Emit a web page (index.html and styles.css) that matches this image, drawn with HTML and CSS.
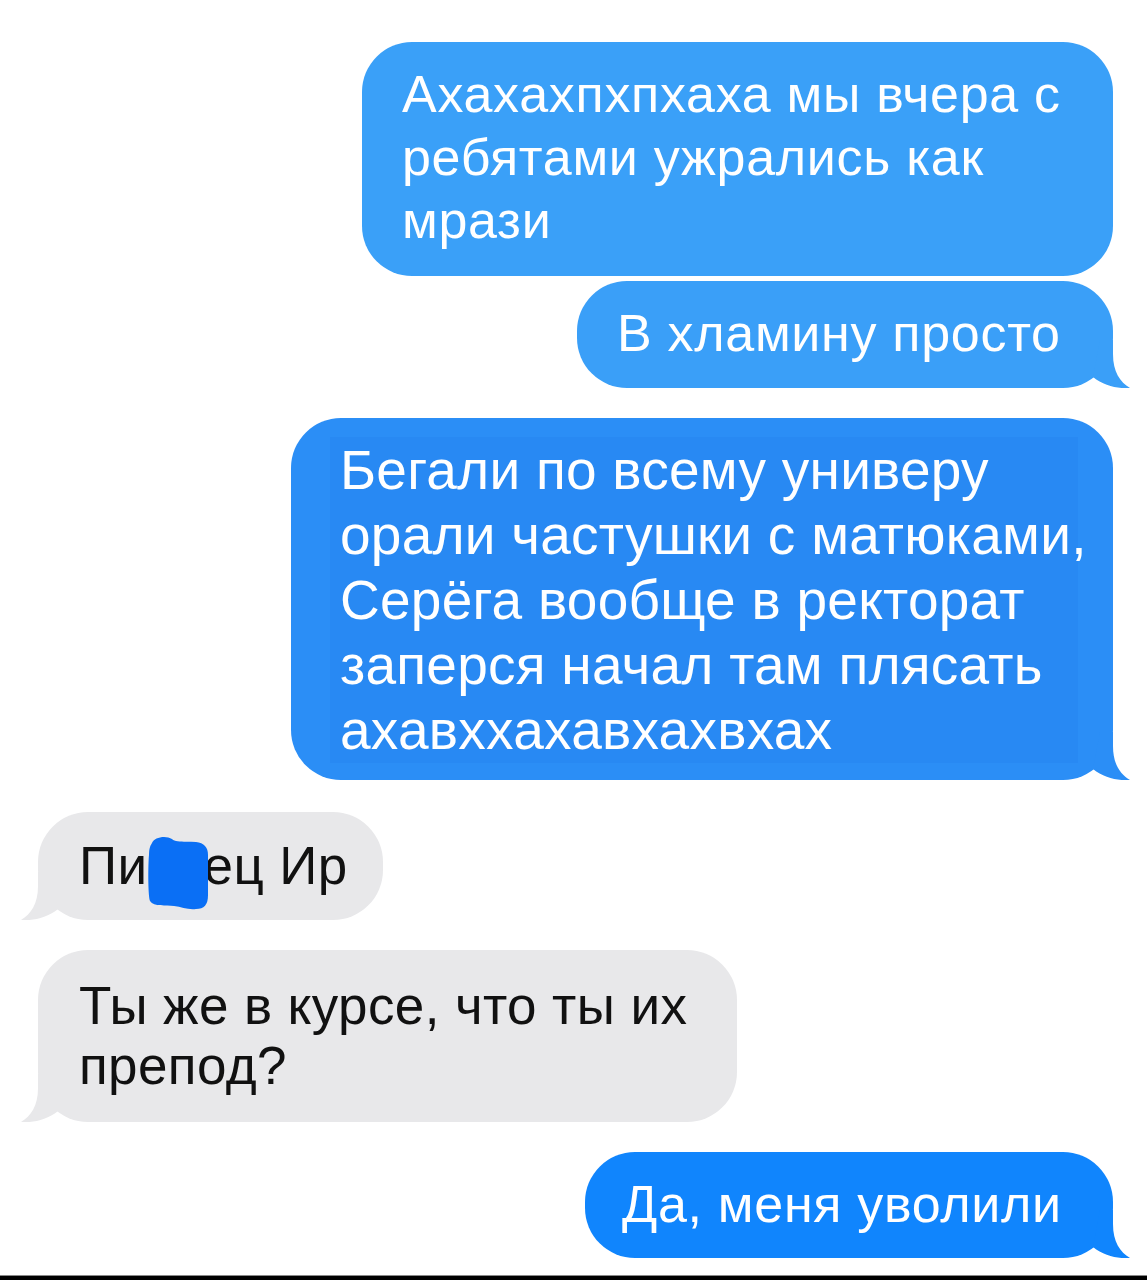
FILE: index.html
```html
<!DOCTYPE html>
<html lang="ru">
<head>
    <meta charset="UTF-8">
    <meta name="viewport" content="width=device-width, initial-scale=1.0">
    <title>Сообщения</title>
    <link rel="stylesheet" href="styles.css">
</head>
<body>
    <div class="chat">
        <!-- outgoing messages -->
        <div class="msg out first">
            Ахахахпхпхаха мы вчера с<br>ребятами ужрались как<br>мрази
        </div>
        <div class="msg out second">
            В хламину просто
            <svg class="tail" viewBox="0 0 50 48" width="50" height="48"><path d="M20 0H33V14C33 32 40 42 50 48C39 49 24 46 13 37Z"/></svg>
        </div>
        <div class="msg out third">
            <p class="selected">Бегали по всему универу<br>орали частушки с матюками,<br>Серёга вообще в ректорат<br>заперся начал там плясать<br>ахавххахавхахвхах</p>
            <svg class="tail" viewBox="0 0 50 48" width="50" height="48"><path d="M20 0H33V14C33 32 40 42 50 48C39 49 24 46 13 37Z"/></svg>
        </div>

        <!-- incoming messages -->
        <div class="msg in short">
            Пи<span class="redacted"><svg class="blot" viewBox="0 0 64 76" width="66" height="76"><path d="M6 8C8 2 20 0 26 4C30 8 40 6 50 7C58 8 62 12 62 20V60C62 70 58 74 50 74C42 75 36 72 28 71C20 70 8 72 4 66C2 60 2 30 3 20C3 14 4 11 6 8Z"/></svg></span>ец Ир
            <svg class="tail" viewBox="0 0 50 48" width="50" height="48"><path d="M20 0H33V14C33 32 40 42 50 48C39 49 24 46 13 37Z"/></svg>
        </div>
        <div class="msg in long">
            Ты же в курсе, что ты их<br>препод?
            <svg class="tail" viewBox="0 0 50 48" width="50" height="48"><path d="M20 0H33V14C33 32 40 42 50 48C39 49 24 46 13 37Z"/></svg>
        </div>

        <div class="msg out last">
            Да, меня уволили
            <svg class="tail" viewBox="0 0 50 48" width="50" height="48"><path d="M20 0H33V14C33 32 40 42 50 48C39 49 24 46 13 37Z"/></svg>
        </div>
    </div>
    <div class="bottom-bar"></div>
</body>
</html>
```

FILE: styles.css
```css
body {
    margin: 0;
    background: #fff;
    font-family: "Liberation Sans", Arial, sans-serif;
}
.chat {
    height: 1275px;
    box-sizing: border-box;
    padding: 42px 34px 0 38px;
    display: flex;
    flex-direction: column;
}
.msg {
    --bg: #3aa0f8;
    position: relative;
    box-sizing: border-box;
    background: var(--bg);
    border-radius: 50px;
    white-space: nowrap;
    font-size: 52px;
    letter-spacing: 0.7px;
    line-height: 63px;
}
.msg .tail {
    position: absolute;
    bottom: 0;
    right: -17px;
    fill: var(--bg);
}

/* blue, sent by me */
.out {
    align-self: flex-end;
    color: #fff;
}
.first {
    width: 751px;
    height: 234px;
    padding: 21px 0 0 40px;
}
.second {
    --bg: #3a9ff8;
    width: 536px;
    height: 107px;
    margin-top: 5px;
    padding: 21px 0 0 40px;
}
.third {
    --bg: #2b8ef6;
    width: 822px;
    height: 362px;
    margin-top: 30px;
    padding: 19px 35px 0 39px;
    font-size: 55px;
    letter-spacing: 0.25px;
    line-height: 65px;
}
.selected {
    margin: 0;
    padding: 1px 0 0 10px;
    height: 325px;
    background: #2889f3;
}
.last {
    --bg: #1085fd;
    width: 528px;
    height: 106px;
    margin-top: 30px;
    padding: 21px 0 0 37px;
}

/* grey, received */
.in {
    --bg: #e8e8ea;
    align-self: flex-start;
    color: #111;
    font-size: 53px;
    letter-spacing: 0.4px;
    line-height: 60px;
}
.in .tail {
    right: auto;
    left: -17px;
    transform: scaleX(-1);
}
.short {
    width: 345px;
    height: 108px;
    margin-top: 32px;
    padding: 24px 0 0 41px;
}
.long {
    width: 699px;
    height: 172px;
    margin-top: 30px;
    padding: 26px 0 0 41px;
}
.redacted {
    position: relative;
    display: inline-block;
    width: 56px;
    height: 1px;
}
.blot {
    position: absolute;
    left: -3px;
    top: -48px;
    fill: #0a6ff5;
}

.bottom-bar {
    height: 5px;
    background: #000;
    border-top: 1px solid #888;
}
```
